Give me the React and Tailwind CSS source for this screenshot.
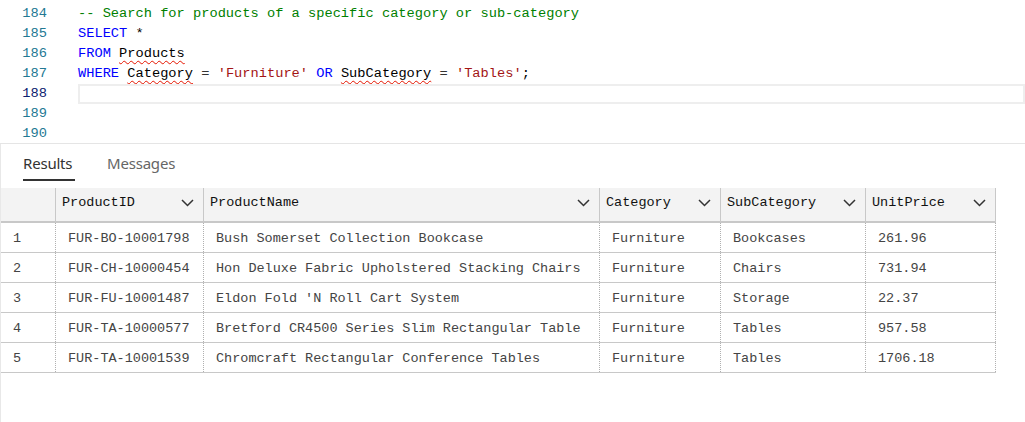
import React from "react";

const mono = { fontFamily: '"Liberation Mono", "DejaVu Sans Mono", monospace' };

function Chevron() {
  return (
    <svg width="13" height="8" viewBox="0 0 13 8" className="shrink-0">
      <path d="M1 1 L6.5 6.5 L12 1" fill="none" stroke="#333" strokeWidth="1.5" />
    </svg>
  );
}

const cols = ["ProductID", "ProductName", "Category", "SubCategory", "UnitPrice"];
const rows = [
  ["FUR-BO-10001798", "Bush Somerset Collection Bookcase", "Furniture", "Bookcases", "261.96"],
  ["FUR-CH-10000454", "Hon Deluxe Fabric Upholstered Stacking Chairs", "Furniture", "Chairs", "731.94"],
  ["FUR-FU-10001487", "Eldon Fold 'N Roll Cart System", "Furniture", "Storage", "22.37"],
  ["FUR-TA-10000577", "Bretford CR4500 Series Slim Rectangular Table", "Furniture", "Tables", "957.58"],
  ["FUR-TA-10001539", "Chromcraft Rectangular Conference Tables", "Furniture", "Tables", "1706.18"],
];

const sq = "underline decoration-wavy decoration-[#e51400] decoration-1 underline-offset-[3px]";

function Line({ n, active, children }) {
  return (
    <div className="flex h-5 items-center">
      <div className={`w-[47px] text-right ${active ? "text-[#0b216f]" : "text-[#237893]"}`}>{n}</div>
      <div className={`ml-[31px] flex-1 h-5 leading-5 whitespace-pre ${active ? "border-2 border-[#eeeeee]" : ""}`}>
        <span>{children}</span>
      </div>
    </div>
  );
}

export default function App() {
  return (
    <div className="w-[1025px] h-[422px] bg-white overflow-hidden">
      <div className="h-[144px] pt-[4px] border-b border-[#e5e5e5] text-[13.7px]" style={mono}>
        <Line n="184"><span className="text-[#008000]">-- Search for products of a specific category or sub-category</span></Line>
        <Line n="185"><span className="text-[#0000ff]">SELECT</span><span className="text-[#000]">{" *"}</span></Line>
        <Line n="186"><span className="text-[#0000ff]">FROM</span>{" "}<span className={`text-black ${sq}`}>Products</span></Line>
        <Line n="187">
          <span className="text-[#0000ff]">WHERE</span>{" "}<span className={`text-black ${sq}`}>Category</span>
          <span className="text-[#333]">{" = "}</span><span className="text-[#a31515]">'Furniture'</span>
          <span className="text-[#0000ff]">{" OR"}</span>{" "}<span className={`text-black ${sq}`}>SubCategory</span>
          <span className="text-[#333]">{" = "}</span><span className="text-[#a31515]">'Tables'</span><span className="text-black">;</span>
        </Line>
        <Line n="188" active>{""}</Line>
        <Line n="189">{""}</Line>
        <Line n="190">{""}</Line>
      </div>
      <div className="border-l border-[#e8e8e8] h-[278px]">
        <div className="h-[44px] flex items-start gap-[32px] pl-[22px] pt-[7px] text-[15px]" style={{ fontFamily: '"Noto Sans", "Open Sans", sans-serif' }}>
          <div className="flex flex-col">
            <span className="text-[#333] leading-[24px] tracking-[-0.2px]">Results</span>
            <span className="mt-[4px] h-[2px] bg-[#333] w-[52px]"></span>
          </div>
          <span className="text-[#666] leading-[24px] tracking-[-0.2px]">Messages</span>
        </div>
        <div className="w-[995px] text-[13.5px]" style={mono}>
          <div className="grid grid-cols-[55px_148px_396px_121px_145px_130px] h-[35px] bg-[#f3f3f3] border-b-2 border-[#c8c8c8]">
            <div className="border-r border-[#c8c8c8]"></div>
            {cols.map((c) => (
              <div key={c} className="flex items-center justify-between pl-[6px] pr-[9px] pb-[3px] border-r border-[#c8c8c8] text-[#111]">
                <span>{c}</span>
                <Chevron />
              </div>
            ))}
          </div>
          {rows.map((r, i) => (
            <div key={i} className="grid grid-cols-[55px_148px_396px_121px_145px_130px] h-[30px] border-b border-[#c8c8c8] text-[#444]">
              <div className="flex items-center pl-[12px] pt-[4px] border-r border-dotted border-[#b0b0b0]">{i + 1}</div>
              {r.map((v, j) => (
                <div key={j} className="flex items-center pl-[12px] pt-[4px] border-r border-dotted border-[#b0b0b0] whitespace-pre">{v}</div>
              ))}
            </div>
          ))}
        </div>
      </div>
    </div>
  );
}
